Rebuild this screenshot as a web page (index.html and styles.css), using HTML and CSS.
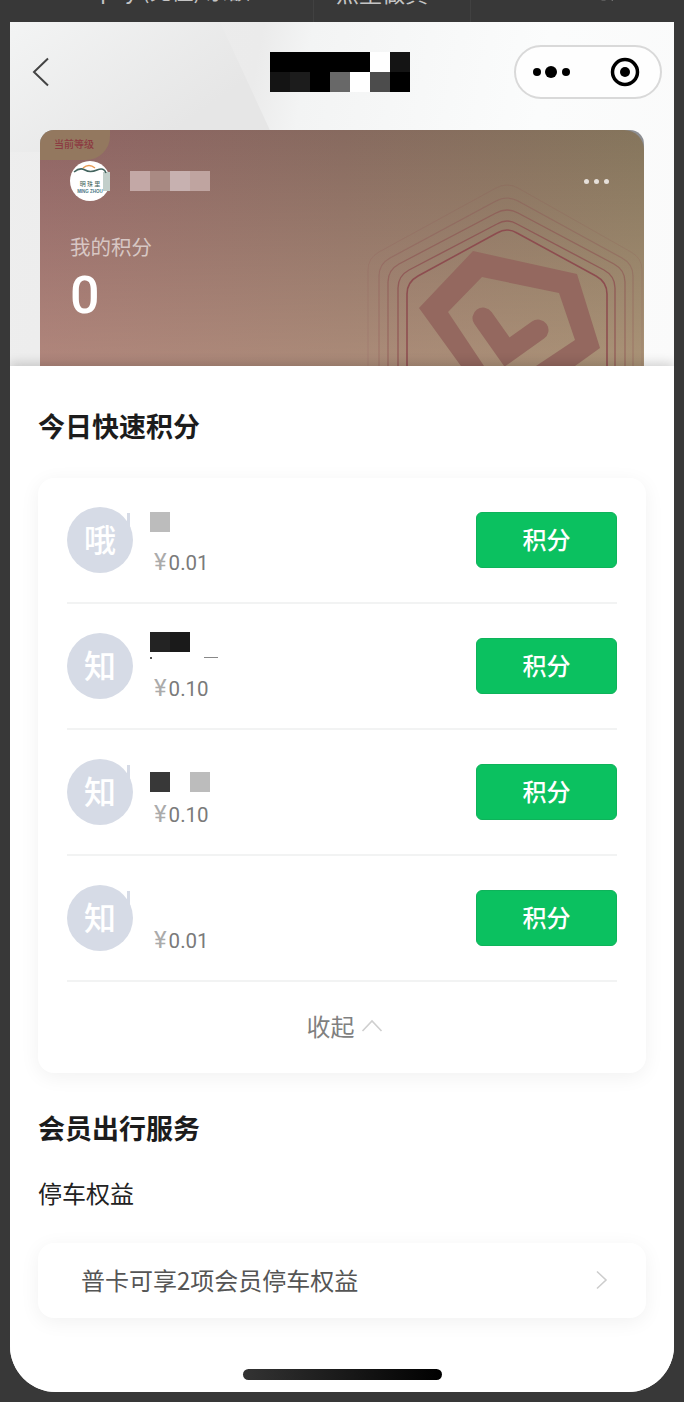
FILE: index.html
```html
<!DOCTYPE html>
<html lang="zh-CN">
<head>
    <meta charset="UTF-8">
    <meta name="viewport" content="width=device-width, initial-scale=1.0">
    <title>我的积分</title>
    <link rel="stylesheet" href="styles.css">
</head>
<body>
    <div class="status-bar">
        <div class="status-cell status-left">10:37 pay (充值) 余额</div>
        <div class="status-cell status-mid">点重做真</div>
        <div class="status-cell status-right">
            <svg class="status-icon" viewBox="0 0 30 30" width="30" height="30"><path d="M5 14 a11 11 0 0 0 17 5 M19 15 L24 21 L27 14" fill="none" stroke="#bdbdbd" stroke-width="2"/></svg>
        </div>
    </div>

    <div class="phone">
        <div class="top-area">
            <header class="nav">
                <svg class="back" viewBox="0 0 18 30" width="18" height="30"><path d="M16 1.500 L2 15 L16 28.500" fill="none" stroke="#444" stroke-width="2"/></svg>
                <div class="mosaic-title">
                    <i class="t-0"></i><i class="t-0"></i><i class="t-0"></i><i class="t-0"></i><i class="t-0"></i><i class="t-w"></i><i class="t-1"></i>
                    <i class="t-1"></i><i class="t-2"></i><i class="t-0"></i><i class="t-6"></i><i class="t-w"></i><i class="t-4"></i><i class="t-0"></i>
                </div>
                <div class="capsule">
                    <svg viewBox="0 0 148 54" width="148" height="54">
                        <circle cx="23" cy="27" r="4"/>
                        <circle cx="37" cy="27" r="6"/>
                        <circle cx="52" cy="27" r="4"/>
                        <circle cx="111" cy="27" r="12.5" fill="none" stroke="#000" stroke-width="3.5"/>
                        <circle cx="111" cy="27" r="5"/>
                    </svg>
                </div>
            </header>

            <section class="level-card">
                <div class="level-bg"></div>
                <svg class="level-deco" viewBox="0 0 604 236" width="604" height="236">
                    <g fill="none" stroke="#8c4a4e">
                        <path class="ring-1" d="M328 236 V140 Q328 128 339 122 L456 58 Q467 52 478 58 L591 122 Q602 128 602 140 V236"/>
                        <path class="ring-2" d="M339 236 V146 Q339 134 350 128 L456 71 Q467 65 478 71 L582 128 Q593 134 593 146 V236"/>
                        <path class="ring-3" d="M348 236 V152 Q348 140 359 134 L456 83 Q467 77 478 83 L574 134 Q585 140 585 152 V236"/>
                        <path class="ring-4" d="M358 236 V158 Q358 146 369 140 L457 94 Q467 88 477 94 L564 140 Q575 146 575 158 V236"/>
                        <path class="ring-5" d="M367 236 V164 Q367 152 378 146 L457 103 Q467 97 477 103 L556 146 Q567 152 567 164 V236"/>
                    </g>
                    <path class="deco-mark" fill-rule="evenodd" d="M433 121 L537 144 L560 218 L460 290 L379 178 Z M442 147 L519 163 L535 210 L460 260 L408 182 Z"/>
                    <path class="deco-mark-line" d="M443 188 L467 222 L498 200"/>
                </svg>
                <div class="level-tag">当前等级</div>
                <div class="user-row">
                    <svg class="logo" viewBox="0 0 40 40" width="40" height="40">
                        <circle cx="20" cy="20" r="20" fill="#fff"/>
                        <rect x="33" y="11" width="7" height="19" fill="#c2cfca"/>
                        <path d="M4 11 Q10 6 15 9 T27 9 T36 12" fill="none" stroke="#44655f" stroke-width="1.6"/>
                        <path d="M13 7 Q19 2 25 7" fill="none" stroke="#e79a52" stroke-width="1.4"/>
                        <text class="logo-cn" x="20" y="25" text-anchor="middle">明 珠 里</text>
                        <text class="logo-en" x="20" y="32" text-anchor="middle">MING ZHOU</text>
                    </svg>
                    <div class="mosaic-name">
                        <i class="n-1"></i><i class="n-2"></i><i class="n-3"></i><i class="n-4"></i>
                    </div>
                    <div class="more"><i></i><i></i><i></i></div>
                </div>
                <div class="points-label">我的积分</div>
                <div class="points-value">0</div>
            </section>
        </div>

        <main class="sheet">
            <h2 class="section-title">今日快速积分</h2>
            <div class="list-card">
                <div class="task-row">
                    <div class="avatar mark">哦</div>
                    <div class="task-info">
                        <div class="blur-name gap-a"><i class="b-grey"></i></div>
                        <div class="price"><span class="yen">¥</span>0.01</div>
                    </div>
                    <button class="earn-btn">积分</button>
                </div>
                <div class="task-row">
                    <div class="avatar">知</div>
                    <div class="task-info">
                        <div class="blur-name"><i class="b-dark"></i><i class="b-black"></i></div>
                        <div class="specks"><i></i><i></i></div>
                        <div class="price"><span class="yen">¥</span>0.10</div>
                    </div>
                    <button class="earn-btn">积分</button>
                </div>
                <div class="task-row">
                    <div class="avatar mark">知</div>
                    <div class="task-info">
                        <div class="blur-name gap-c"><i class="b-mid"></i><i class="b-none"></i><i class="b-grey"></i></div>
                        <div class="price"><span class="yen">¥</span>0.10</div>
                    </div>
                    <button class="earn-btn">积分</button>
                </div>
                <div class="task-row">
                    <div class="avatar mark">知</div>
                    <div class="task-info">
                        <div class="price"><span class="yen">¥</span>0.01</div>
                    </div>
                    <button class="earn-btn">积分</button>
                </div>
                <div class="collapse">
                    <span>收起</span>
                    <svg viewBox="0 0 22 13" width="22" height="13"><path d="M1.500 12 L11 2 L20.500 12" fill="none" stroke="#cfcfcf" stroke-width="1.6"/></svg>
                </div>
            </div>

            <h2 class="section-title second">会员出行服务</h2>
            <div class="sub-title">停车权益</div>
            <div class="perk-card">
                <span>普卡可享2项会员停车权益</span>
                <svg viewBox="0 0 13 20" width="13" height="20"><path d="M2 1.500 L11 10 L2 18.500" fill="none" stroke="#cdcdcd" stroke-width="1.6"/></svg>
            </div>
            <div class="home-bar"></div>
        </main>
    </div>
</body>
</html>
```

FILE: styles.css
```css
* {
    box-sizing: border-box;
}
html, body {
    margin: 0;
    padding: 0;
}
body {
    width: 684px;
    height: 1402px;
    overflow: hidden;
    background-color: #383838;
    font-family: "Noto Sans CJK SC", "Noto Sans", sans-serif;
}
i {
    display: block;
}

/* clipped remains of the bar above the page */
.status-bar {
    display: flex;
    height: 22px;
    overflow: hidden;
    color: #c4c4c4;
    font-size: 22px;
    line-height: 24px;
    white-space: nowrap;
}
.status-cell {
    display: flex;
    align-items: flex-end;
    overflow: hidden;
    border-right: 1px solid #414141;
}
.status-left {
    width: 314px;
    padding: 0 0 21px 40px;
}
.status-mid {
    width: 157px;
    padding: 0 0 18px 22px;
    font-size: 23px;
}
.status-right {
    flex: 1;
    padding: 0 0 14px 117px;
    border-right: none;
}
.status-icon {
    display: block;
    flex: none;
}

.phone {
    width: 664px;
    height: 1370px;
    margin-left: 10px;
    border-radius: 0 0 46px 46px;
    overflow: hidden;
    background: #fff;
}

.top-area {
    position: relative;
    height: 344px;
    overflow: hidden;
    background: linear-gradient(100deg, #eeeeee 0%, #ebebeb 35%, #f3f4f4 42%, #fbfcfc 75%, #fafafa 100%);
}
.top-area::before {
    content: "";
    position: absolute;
    left: 0;
    top: 0;
    width: 270px;
    height: 130px;
    background: linear-gradient(145deg, #f3f4f4 0%, #e6e6e6 70%);
    clip-path: polygon(0 0, 210px 0, 270px 130px, 0 130px);
}

.nav {
    position: relative;
    display: flex;
    align-items: center;
    height: 100px;
    padding: 0 12px 0 22px;
}
.back {
    display: block;
}
.mosaic-title {
    display: grid;
    grid-template-columns: repeat(7, 20px);
    grid-auto-rows: 20px;
    margin-left: 220px;
}
.t-0 { background: #000; }
.t-1 { background: #141414; }
.t-2 { background: #1c1c1c; }
.t-4 { background: #4c4c4c; }
.t-6 { background: #686868; }
.t-w { background: #fff; }
.capsule {
    width: 148px;
    height: 54px;
    margin-left: auto;
    border: 2px solid #d9d9d9;
    border-radius: 27px;
    background: rgba(255, 255, 255, 0.75);
}
.capsule svg {
    display: block;
    margin: -2px 0 0 -2px;
}

.level-card {
    position: relative;
    width: 604px;
    height: 236px;
    margin: 8px 0 0 30px;
    padding: 31px 30px 0;
    border-radius: 14px 14px 0 0;
    overflow: hidden;
    background: #8d8e92;
    color: #fff;
}
.level-bg {
    position: absolute;
    inset: 0;
    border-radius: 20px 20px 0 0;
    background:
        linear-gradient(180deg, rgba(255, 220, 190, 0) 0%, rgba(255, 215, 180, 0.3) 100%),
        linear-gradient(90deg, #8f6464 0%, #876a5f 50%, #85755c 100%);
}
.level-deco {
    position: absolute;
    left: 0;
    top: 0;
}
.ring-1 { opacity: 0.15; }
.ring-2 { opacity: 0.3; stroke-width: 1.2; }
.ring-3 { opacity: 0.5; stroke-width: 1.3; }
.ring-4 { opacity: 0.7; stroke-width: 1.4; }
.ring-5 { opacity: 0.95; stroke-width: 1.6; }
.deco-mark {
    fill: #94685f;
}
.deco-mark-line {
    fill: none;
    stroke: #94685f;
    stroke-width: 21;
    stroke-linecap: round;
    stroke-linejoin: miter;
}
.level-tag {
    position: absolute;
    left: 0;
    top: 0;
    width: 70px;
    height: 30px;
    padding: 7px 0 0 14px;
    border-bottom-right-radius: 24px;
    background: #93785f;
    color: #8c3b42;
    font-size: 10px;
    font-weight: 500;
    line-height: 14px;
}
.user-row {
    position: relative;
    display: flex;
    align-items: center;
    height: 40px;
}
.logo {
    display: block;
}
.logo-cn {
    font-size: 6px;
    fill: #3e5f58;
}
.logo-en {
    font-family: "Liberation Sans", sans-serif;
    font-size: 4.500px;
    font-weight: 700;
    fill: #4b7a86;
}
.mosaic-name {
    display: flex;
    margin-left: 20px;
}
.mosaic-name i {
    width: 20px;
    height: 20px;
}
.n-1 { background: #c3a8a6; }
.n-2 { background: #a98a83; }
.n-3 { background: #c7b1b0; }
.n-4 { background: #bfa4a0; }
.more {
    display: flex;
    gap: 5px;
    margin-left: auto;
    margin-right: 5px;
}
.more i {
    width: 5px;
    height: 5px;
    border-radius: 50%;
    background: #e6e0da;
}
.points-label {
    position: relative;
    margin-top: 29px;
    font-size: 20.500px;
    line-height: 32px;
    color: rgba(255, 255, 255, 0.6);
}
.points-value {
    position: relative;
    margin-top: 1px;
    font-family: Roboto, sans-serif;
    font-size: 52px;
    font-weight: 500;
    line-height: 66px;
}

.sheet {
    position: relative;
    height: 1026px;
    padding: 42px 28px 0;
    background: #fff;
    box-shadow: 0 -3px 10px rgba(0, 0, 0, 0.16);
}
.section-title {
    margin: 0 0 32px;
    padding-bottom: 2px;
    font-size: 27px;
    line-height: 36px;
    font-weight: 700;
    color: #1c1c1c;
}
.section-title.second {
    margin: 37px 0 0;
}
.sub-title {
    margin: 30px 0 31px;
    padding-bottom: 4px;
    font-size: 24px;
    line-height: 30px;
    color: #222;
}

.list-card {
    width: 608px;
    padding: 0 29px;
    border-radius: 16px;
    background: #fff;
    box-shadow: 0 4px 20px rgba(0, 0, 0, 0.06);
}
.task-row {
    display: flex;
    align-items: center;
    height: 126px;
    border-bottom: 2px solid #f2f3f3;
}
.avatar {
    position: relative;
    flex: none;
    width: 66px;
    height: 66px;
    padding-bottom: 4px;
    border-radius: 50%;
    background: #d6dbe6;
    color: #fff;
    font-size: 32px;
    font-weight: 500;
    line-height: 62px;
    text-align: center;
}
.avatar.mark::after {
    content: "";
    position: absolute;
    left: 60px;
    top: 6px;
    width: 3px;
    height: 18px;
    background: #d6dbe6;
}
.task-info {
    align-self: stretch;
    display: flex;
    flex-direction: column;
    justify-content: flex-end;
    flex: 1;
    padding: 0 0 27px 17px;
}
.blur-name {
    display: flex;
}
.blur-name i {
    width: 20px;
    height: 20px;
}
.gap-a { margin-bottom: 18px; }
.gap-c { margin-bottom: 10px; }
.b-grey { background: #bcbcbc; }
.b-dark { background: #232323; }
.b-black { background: #1a1a1a; }
.b-mid { background: #383838; }
.specks {
    display: flex;
    justify-content: space-between;
    width: 68px;
    height: 2px;
    margin: 5px 0 17px;
}
.specks i {
    width: 2px;
    height: 2px;
    background: #555;
}
.specks i:last-child {
    width: 14px;
    height: 1px;
    background: #888;
}
.price {
    padding-left: 4px;
    font-family: Roboto, sans-serif;
    font-size: 20.500px;
    line-height: 24px;
    color: #7a7a7a;
}
.yen {
    margin-right: 2px;
    font-size: 24px;
    color: #ababab;
}
.earn-btn {
    flex: none;
    width: 141px;
    height: 56px;
    padding: 0 0 4px;
    border: 1px solid #0eb35a;
    border-radius: 6px;
    background: #0bc160;
    color: #fff;
    font-family: inherit;
    font-size: 24px;
    font-weight: 500;
}
.collapse {
    display: flex;
    align-items: center;
    justify-content: center;
    gap: 6px;
    height: 91px;
    padding: 0 0 4px 5px;
    color: #808080;
    font-size: 24px;
}

.perk-card {
    display: flex;
    align-items: center;
    justify-content: space-between;
    width: 608px;
    height: 75px;
    padding: 0 38px 2px 43px;
    border-radius: 16px;
    background: #fff;
    box-shadow: 0 4px 20px rgba(0, 0, 0, 0.06);
    color: #555;
    font-size: 24px;
}
.home-bar {
    width: 199px;
    height: 11px;
    margin: 51px auto 0;
    border-radius: 6px;
    background: linear-gradient(90deg, #333 0%, #000 100%);
}
```
